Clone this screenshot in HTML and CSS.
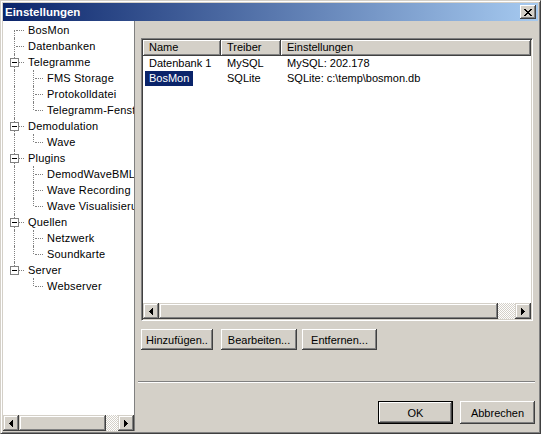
FILE: index.html
```html
<!DOCTYPE html>
<html>

<head>
  <title>Einstellungen</title>
  <meta name="viewport" content="width=device-width, initial-scale=1.0">
  <link rel="stylesheet" href="styles.css">
</head>

<body>
  <div class="window">
    <div class="titlebar">
      <span class="title">Einstellungen</span>
      <span class="close-btn">
        <svg width="8" height="7" viewBox="0 0 8 7" shape-rendering="crispEdges">
          <path d="M0 0h2v1h-2zM6 0h2v1h-2zM1 1h2v1h-2zM5 1h2v1h-2zM2 2h4v1h-4zM3 3h2v1h-2zM2 4h4v1h-4zM1 5h2v1h-2zM5 5h2v1h-2zM0 6h2v1h-2zM6 6h2v1h-2z" fill="#000"/>
        </svg>
      </span>
    </div>

    <div class="client">
      <div class="tree">
        <div class="tree-items">
          <div class="tree-row"><span class="g first"></span><span class="label">BosMon</span></div>
          <div class="tree-row"><span class="g tee"></span><span class="label">Datenbanken</span></div>
          <div class="tree-row"><span class="g tee"><i class="box"></i></span><span class="label">Telegramme</span></div>
          <div class="tree-row"><span class="g line"></span><span class="g tee"></span><span class="label">FMS Storage</span></div>
          <div class="tree-row"><span class="g line"></span><span class="g tee"></span><span class="label">Protokolldatei</span></div>
          <div class="tree-row"><span class="g line"></span><span class="g end"></span><span class="label">Telegramm-Fenster</span></div>
          <div class="tree-row"><span class="g tee"><i class="box"></i></span><span class="label">Demodulation</span></div>
          <div class="tree-row"><span class="g line"></span><span class="g end"></span><span class="label">Wave</span></div>
          <div class="tree-row"><span class="g tee"><i class="box"></i></span><span class="label">Plugins</span></div>
          <div class="tree-row"><span class="g line"></span><span class="g tee"></span><span class="label">DemodWaveBML</span></div>
          <div class="tree-row"><span class="g line"></span><span class="g tee"></span><span class="label">Wave Recording</span></div>
          <div class="tree-row"><span class="g line"></span><span class="g end"></span><span class="label">Wave Visualisierung</span></div>
          <div class="tree-row"><span class="g tee"><i class="box"></i></span><span class="label">Quellen</span></div>
          <div class="tree-row"><span class="g line"></span><span class="g tee"></span><span class="label">Netzwerk</span></div>
          <div class="tree-row"><span class="g line"></span><span class="g end"></span><span class="label">Soundkarte</span></div>
          <div class="tree-row"><span class="g end"><i class="box"></i></span><span class="label">Server</span></div>
          <div class="tree-row"><span class="g"></span><span class="g end"></span><span class="label">Webserver</span></div>
        </div>
        <div class="hscroll">
          <span class="sb-btn">
            <svg width="4" height="7" viewBox="0 0 4 7" shape-rendering="crispEdges"><path d="M3 0h1v7h-1zM2 1h1v5h-1zM1 2h1v3h-1zM0 3h1v1h-1z"/></svg>
          </span>
          <span class="sb-thumb tree-thumb"></span>
          <span class="sb-track"></span>
          <span class="sb-btn">
            <svg width="4" height="7" viewBox="0 0 4 7" shape-rendering="crispEdges"><path d="M0 0h1v7h-1zM1 1h1v5h-1zM2 2h1v3h-1zM3 3h1v1h-1z"/></svg>
          </span>
        </div>
      </div>

      <div class="main">
        <div class="listview">
          <div class="list-body">
            <div class="list-header">
              <div class="hcol col-name">Name</div>
              <div class="hcol col-driver">Treiber</div>
              <div class="hcol col-settings">Einstellungen</div>
            </div>
            <div class="list-row">
              <div class="cell col-name"><span class="item">Datenbank 1</span></div>
              <div class="cell col-driver">MySQL</div>
              <div class="cell col-settings">MySQL: 202.178</div>
            </div>
            <div class="list-row">
              <div class="cell col-name"><span class="item selected">BosMon</span></div>
              <div class="cell col-driver">SQLite</div>
              <div class="cell col-settings">SQLite: c:\temp\bosmon.db</div>
            </div>
          </div>
          <div class="hscroll">
            <span class="sb-btn">
              <svg width="4" height="7" viewBox="0 0 4 7" shape-rendering="crispEdges"><path d="M3 0h1v7h-1zM2 1h1v5h-1zM1 2h1v3h-1zM0 3h1v1h-1z"/></svg>
            </span>
            <span class="sb-thumb list-thumb"></span>
            <span class="sb-track"></span>
            <span class="sb-btn">
              <svg width="4" height="7" viewBox="0 0 4 7" shape-rendering="crispEdges"><path d="M0 0h1v7h-1zM1 1h1v5h-1zM2 2h1v3h-1zM3 3h1v1h-1z"/></svg>
            </span>
          </div>
        </div>

        <div class="list-buttons">
          <button class="btn btn-add">Hinzufügen..</button>
          <button class="btn btn-edit">Bearbeiten...</button>
          <button class="btn btn-remove">Entfernen...</button>
        </div>

        <div class="separator"></div>

        <div class="dialog-buttons">
          <button class="btn btn-dialog default">OK</button>
          <button class="btn btn-dialog">Abbrechen</button>
        </div>
      </div>
    </div>
  </div>
</body>

</html>
```

FILE: styles.css
```css
body {
  margin: 0;
  font-family: "Liberation Sans", Arial, sans-serif;
  font-size: 11px;
  color: #000;
  background: #d4d0c8;
}

.window {
  width: 541px;
  height: 434px;
  box-sizing: border-box;
  padding: 2px;
  border: 1px solid;
  border-color: #d4d0c8 #404040 #404040 #d4d0c8;
  box-shadow: inset 1px 1px #fff, inset -1px -1px #808080;
  background: #d4d0c8;
  display: flex;
  flex-direction: column;
}

/* title bar */
.titlebar {
  height: 18px;
  flex: none;
  display: flex;
  align-items: center;
  justify-content: space-between;
  padding: 0 2px 0 2px;
  background: linear-gradient(to right, #0a246a, #a6caf0);
}

.title {
  color: #fff;
  font-weight: bold;
  font-size: 11.5px;
}

.close-btn {
  width: 16px;
  height: 14px;
  display: flex;
  align-items: center;
  justify-content: center;
  background: #d4d0c8;
  box-shadow: inset -1px -1px #404040, inset 1px 1px #fff, inset -2px -2px #808080;
}

.client {
  flex: 1;
  display: flex;
  min-height: 0;
}

/* tree view */
.tree {
  width: 132px;
  flex: none;
  box-sizing: border-box;
  border-right: 1px solid #808080;
  background: #fff;
  display: flex;
  flex-direction: column;
}

.tree-items {
  flex: 1;
  overflow: hidden;
  padding: 1px 0 0 2px;
}

.tree-row {
  display: flex;
  height: 16px;
  align-items: center;
  white-space: nowrap;
}

.g {
  position: relative;
  width: 19px;
  height: 16px;
  flex: none;
}

.g.line::before,
.g.tee::before,
.g.end::before,
.g.first::before {
  content: "";
  position: absolute;
  left: 9px;
  top: 0;
  bottom: 0;
  border-left: 1px dotted #808080;
}

.g.end::before {
  bottom: 8px;
}

.g.first::before {
  top: 8px;
}

.g.tee::after,
.g.end::after,
.g.first::after {
  content: "";
  position: absolute;
  left: 11px;
  right: 0;
  top: 8px;
  border-top: 1px dotted #808080;
}

.box {
  position: absolute;
  left: 5px;
  top: 4px;
  width: 9px;
  height: 9px;
  box-sizing: border-box;
  border: 1px solid #808080;
  background: #fff;
  z-index: 1;
}

.box::after {
  content: "";
  position: absolute;
  left: 1px;
  top: 3px;
  width: 5px;
  height: 1px;
  background: #000;
}

.label {
  margin-left: 2px;
  padding: 0 2px;
  line-height: 15px;
  letter-spacing: 0.2px;
}

/* scroll bars */
.hscroll {
  display: flex;
  height: 16px;
  flex: none;
}

.sb-btn,
.sb-thumb {
  width: 16px;
  height: 16px;
  flex: none;
  box-sizing: border-box;
  background: #d4d0c8;
  box-shadow: inset -1px -1px #404040, inset 1px 1px #d4d0c8, inset -2px -2px #808080, inset 2px 2px #fff;
  display: flex;
  align-items: center;
  justify-content: center;
}

.sb-btn svg {
  fill: #000;
}

.tree-thumb {
  width: 87px;
}

.list-thumb {
  width: 339px;
}

.sb-track {
  flex: 1;
  background-image: conic-gradient(#d4d0c8 25%, #fff 0 50%, #d4d0c8 0 75%, #fff 0);
  background-size: 2px 2px;
}

/* right side */
.main {
  flex: 1;
  display: flex;
  flex-direction: column;
  padding: 17px 5px 7px 6px;
}

.listview {
  height: 283px;
  box-sizing: border-box;
  border: 1px solid;
  border-color: #808080 #fff #fff #808080;
  box-shadow: inset 1px 1px #404040, inset -1px -1px #d4d0c8;
  padding: 1px;
  background: #fff;
  display: flex;
  flex-direction: column;
}

.list-body {
  flex: 1;
  overflow: hidden;
}

.list-header {
  display: flex;
  height: 16px;
}

.hcol {
  box-sizing: border-box;
  padding-left: 6px;
  line-height: 15px;
  background: #d4d0c8;
  box-shadow: inset -1px -1px #404040, inset 1px 1px #fff, inset -2px -2px #808080;
}

.col-name {
  width: 78px;
  flex: none;
}

.col-driver {
  width: 60px;
  flex: none;
}

.col-settings {
  flex: 1;
}

.list-row {
  display: flex;
  height: 15px;
  line-height: 15px;
  white-space: nowrap;
}

.cell {
  box-sizing: border-box;
  padding-left: 6px;
}

.cell.col-name {
  padding-left: 2px;
}

.item {
  display: inline-block;
  padding: 0 4px 0 4px;
}

.item.selected {
  background: #0a246a;
  color: #fff;
}

.list-buttons {
  display: flex;
  margin-top: 8px;
}

.btn {
  height: 21px;
  padding: 0;
  border: none;
  font-family: "Liberation Sans", Arial, sans-serif;
  font-size: 11px;
  color: #000;
  background: #d4d0c8;
  box-shadow: inset -1px -1px #404040, inset 1px 1px #fff, inset -2px -2px #808080;
}

.btn-add {
  width: 72px;
}

.btn-edit {
  width: 76px;
  margin-left: 8px;
}

.btn-remove {
  width: 75px;
  margin-left: 5px;
}

.separator {
  margin: 31px -2px 0 -3px;
  height: 2px;
  box-sizing: border-box;
  border-top: 1px solid #808080;
  border-bottom: 1px solid #fff;
}

.dialog-buttons {
  display: flex;
  justify-content: flex-end;
  gap: 7px;
  margin-top: 18px;
  margin-right: -2px;
}

.btn-dialog {
  width: 75px;
  height: 23px;
}

.btn-dialog.default {
  border: 1px solid #000;
}
```
